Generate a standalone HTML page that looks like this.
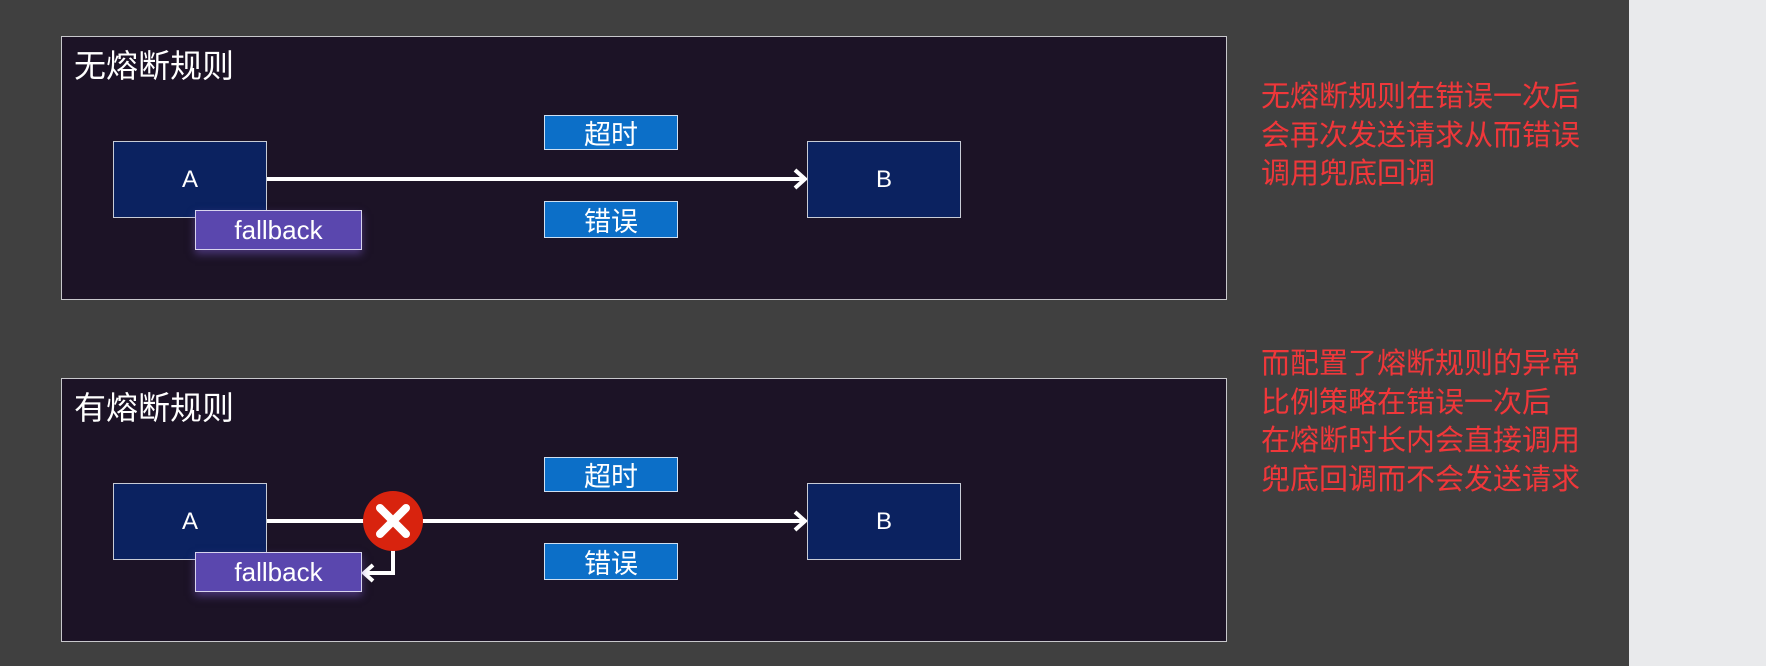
<!DOCTYPE html>
<html><head><meta charset="utf-8"><style>
body{margin:0;width:1766px;height:666px;background:#404040;position:relative;overflow:hidden;font-family:"Liberation Sans","Noto Sans CJK SC",sans-serif}
.strip{position:absolute;left:1629px;top:0;width:137px;height:666px;background:#e9eaec}
.panel{position:absolute;left:61px;width:1166px;height:264px;background:#1c1326;border:1px solid #c8c8cc;box-sizing:border-box}
.title{position:absolute;left:12px;top:4px;color:#fff;font-size:32px}
.box{position:absolute;background:#0b2260;border:1px solid #c8ccd6;box-sizing:border-box;color:#fff;font-size:24px;display:flex;align-items:center;justify-content:center}
.fb{position:absolute;background:#5a47ae;border:1px solid #d8d4ee;box-sizing:border-box;color:#fff;font-size:26px;display:flex;align-items:center;justify-content:center;box-shadow:0 4px 8px rgba(120,90,200,.5)}
.tag{position:absolute;background:#0c6fc8;border:1px solid #cfe0f2;box-sizing:border-box;color:#fff;font-size:27px;display:flex;align-items:center;justify-content:center}
.red{position:absolute;left:1261px;color:#f0373a;font-size:29px;line-height:38.5px}
</style></head><body>
<div class="strip"></div>
<div class="panel" style="top:36px">
<div class="title">无熔断规则</div>
<svg style="position:absolute;left:0;top:0" width="1166" height="264"><line x1="204" y1="142" x2="742" y2="142" stroke="#fff" stroke-width="4"/><polyline points="733,133 743,142 733,151" fill="none" stroke="#fff" stroke-width="4"/></svg>
<div class="box" style="left:51px;top:104px;width:154px;height:77px">A</div>
<div class="box" style="left:745px;top:104px;width:154px;height:77px">B</div>
<div class="fb" style="left:133px;top:173px;width:167px;height:40px">fallback</div>
<div class="tag" style="left:482px;top:78px;width:134px;height:35px">超时</div>
<div class="tag" style="left:482px;top:164px;width:134px;height:37px">错误</div>
</div>
<div class="panel" style="top:378px">
<div class="title">有熔断规则</div>
<svg style="position:absolute;left:0;top:0" width="1166" height="264"><line x1="204" y1="142" x2="742" y2="142" stroke="#fff" stroke-width="4"/><polyline points="733,133 743,142 733,151" fill="none" stroke="#fff" stroke-width="4"/>
<polyline points="331,160 331,194 303,194" fill="none" stroke="#fff" stroke-width="4"/><polyline points="311,186 302,194 311,202" fill="none" stroke="#fff" stroke-width="4"/>
<circle cx="331" cy="142" r="30" fill="#d8230e"/><path d="M318 129L344 155M344 129L318 155" stroke="#fff" stroke-width="8" stroke-linecap="round"/></svg>
<div class="box" style="left:51px;top:104px;width:154px;height:77px">A</div>
<div class="box" style="left:745px;top:104px;width:154px;height:77px">B</div>
<div class="fb" style="left:133px;top:173px;width:167px;height:40px">fallback</div>
<div class="tag" style="left:482px;top:78px;width:134px;height:35px">超时</div>
<div class="tag" style="left:482px;top:164px;width:134px;height:37px">错误</div>
</div>
<div class="red" style="top:78px">无熔断规则在错误一次后<br>会再次发送请求从而错误<br>调用兜底回调</div>
<div class="red" style="top:345px">而配置了熔断规则的异常<br>比例策略在错误一次后<br>在熔断时长内会直接调用<br>兜底回调而不会发送请求</div>
</body></html>
